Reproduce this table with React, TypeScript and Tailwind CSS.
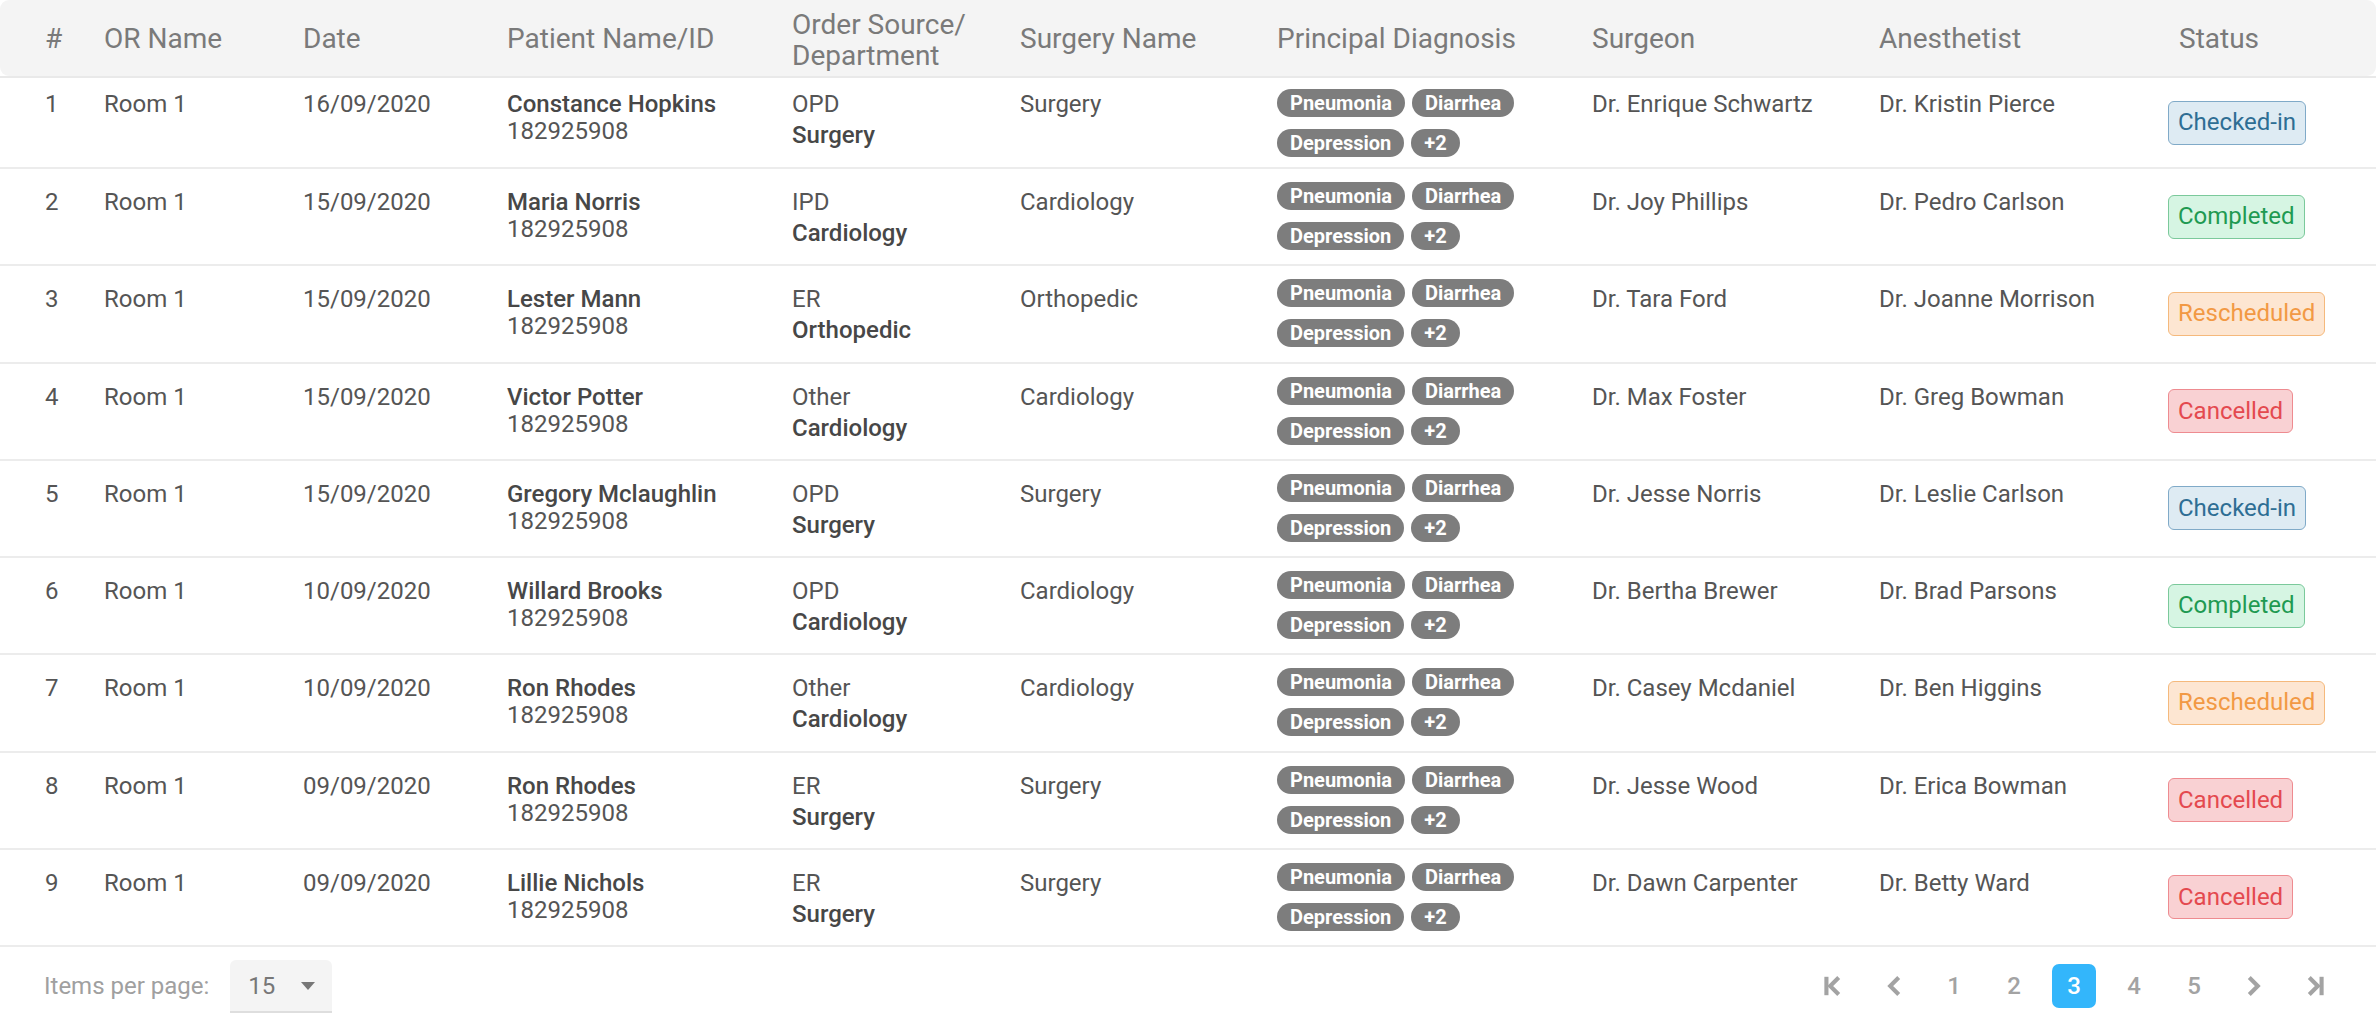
import { ReactNode } from 'react';

type Status = 'Checked-in' | 'Completed' | 'Rescheduled' | 'Cancelled';

type Row = {
  id: number;
  room: string;
  date: string;
  patient: string;
  patientId: string;
  source: string;
  department: string;
  surgery: string;
  surgeon: string;
  anesthetist: string;
  status: Status;
};

const rows: Row[] = [
  { id: 1, room: 'Room 1', date: '16/09/2020', patient: 'Constance Hopkins', patientId: '182925908', source: 'OPD', department: 'Surgery', surgery: 'Surgery', surgeon: 'Dr. Enrique Schwartz', anesthetist: 'Dr. Kristin Pierce', status: 'Checked-in' },
  { id: 2, room: 'Room 1', date: '15/09/2020', patient: 'Maria Norris', patientId: '182925908', source: 'IPD', department: 'Cardiology', surgery: 'Cardiology', surgeon: 'Dr. Joy Phillips', anesthetist: 'Dr. Pedro Carlson', status: 'Completed' },
  { id: 3, room: 'Room 1', date: '15/09/2020', patient: 'Lester Mann', patientId: '182925908', source: 'ER', department: 'Orthopedic', surgery: 'Orthopedic', surgeon: 'Dr. Tara Ford', anesthetist: 'Dr. Joanne Morrison', status: 'Rescheduled' },
  { id: 4, room: 'Room 1', date: '15/09/2020', patient: 'Victor Potter', patientId: '182925908', source: 'Other', department: 'Cardiology', surgery: 'Cardiology', surgeon: 'Dr. Max Foster', anesthetist: 'Dr. Greg Bowman', status: 'Cancelled' },
  { id: 5, room: 'Room 1', date: '15/09/2020', patient: 'Gregory Mclaughlin', patientId: '182925908', source: 'OPD', department: 'Surgery', surgery: 'Surgery', surgeon: 'Dr. Jesse Norris', anesthetist: 'Dr. Leslie Carlson', status: 'Checked-in' },
  { id: 6, room: 'Room 1', date: '10/09/2020', patient: 'Willard Brooks', patientId: '182925908', source: 'OPD', department: 'Cardiology', surgery: 'Cardiology', surgeon: 'Dr. Bertha Brewer', anesthetist: 'Dr. Brad Parsons', status: 'Completed' },
  { id: 7, room: 'Room 1', date: '10/09/2020', patient: 'Ron Rhodes', patientId: '182925908', source: 'Other', department: 'Cardiology', surgery: 'Cardiology', surgeon: 'Dr. Casey Mcdaniel', anesthetist: 'Dr. Ben Higgins', status: 'Rescheduled' },
  { id: 8, room: 'Room 1', date: '09/09/2020', patient: 'Ron Rhodes', patientId: '182925908', source: 'ER', department: 'Surgery', surgery: 'Surgery', surgeon: 'Dr. Jesse Wood', anesthetist: 'Dr. Erica Bowman', status: 'Cancelled' },
  { id: 9, room: 'Room 1', date: '09/09/2020', patient: 'Lillie Nichols', patientId: '182925908', source: 'ER', department: 'Surgery', surgery: 'Surgery', surgeon: 'Dr. Dawn Carpenter', anesthetist: 'Dr. Betty Ward', status: 'Cancelled' },
];

const statusStyles: Record<Status, string> = {
  'Checked-in': 'bg-[#deebf3] border-[#80aac8] text-[#2e6e94]',
  Completed: 'bg-[#d6f5e3] border-[#7bc99b] text-[#1f9a52]',
  Rescheduled: 'bg-[#fde6d2] border-[#f5b97c] text-[#f29944]',
  Cancelled: 'bg-[#f9d1d3] border-[#ee8b90] text-[#e4494f]',
};

const cols = 'grid grid-cols-[59px_199px_204px_285px_228px_257px_315px_287px_289px_1fr] pl-[45px]';

const Chip = ({ children }: { children: ReactNode }) => (
  <span className="h-[28px] px-[13px] rounded-full bg-[#7d7d7d] text-white text-[20px] font-bold leading-[28px]">
    {children}
  </span>
);

const ChevronIcon = ({ dir, bar }: { dir: 'left' | 'right'; bar?: boolean }) => (
  <svg width="26" height="26" viewBox="0 0 24 24" fill="none" stroke="#a3a3a3" strokeWidth="3.8">
    {dir === 'left' ? (
      <>
        <path d="M15 5.5 L8.5 12 L15 18.5" strokeLinecap="square" />
        {bar && <path d="M5 3.5 V20.5" />}
      </>
    ) : (
      <>
        <path d="M9 5.5 L15.5 12 L9 18.5" strokeLinecap="square" />
        {bar && <path d="M19 3.5 V20.5" />}
      </>
    )}
  </svg>
);

export default function App() {
  return (
    <div className="w-[2376px] h-[1024px] bg-white font-[Roboto,sans-serif] text-[24px] text-[#555] overflow-hidden">
      {/* header */}
      <div className={`${cols} h-[76px] items-center rounded-[9px] bg-[#f4f4f4] text-[28px] leading-[31px] text-[#7a7a7a]`}>
        <div>#</div>
        <div>OR Name</div>
        <div>Date</div>
        <div>Patient Name/ID</div>
        <div className="pt-[3px]">
          Order Source/
          <br />
          Department
        </div>
        <div>Surgery Name</div>
        <div>Principal Diagnosis</div>
        <div>Surgeon</div>
        <div>Anesthetist</div>
        <div className="pl-[11px]">Status</div>
      </div>
      <div className="h-[2px] bg-[#e9e9e9]" />

      {rows.map((r, i) => {
        const first = i === 0;
        const textPad = first ? 'pt-[13px]' : 'pt-[20px]';
        return (
          <div
            key={r.id}
            className={`${cols} border-b-2 border-[#ececec] leading-[27px] ${first ? 'h-[91px]' : 'h-[97.25px]'}`}
          >
            <div className={textPad}>{r.id}</div>
            <div className={textPad}>{r.room}</div>
            <div className={textPad}>{r.date}</div>
            <div className={textPad}>
              <div className="font-medium text-[#474747]">{r.patient}</div>
              <div>{r.patientId}</div>
            </div>
            <div className={textPad}>
              <div>{r.source}</div>
              <div className="mt-[4px] font-medium text-[#474747]">{r.department}</div>
            </div>
            <div className={textPad}>{r.surgery}</div>
            <div className={`${first ? 'pt-[11px]' : 'pt-[13px]'} pr-[40px] flex flex-wrap content-start gap-x-[7px] gap-y-[12px]`}>
              <Chip>Pneumonia</Chip>
              <Chip>Diarrhea</Chip>
              <Chip>Depression</Chip>
              <Chip>+2</Chip>
            </div>
            <div className={textPad}>{r.surgeon}</div>
            <div className={textPad}>{r.anesthetist}</div>
            <div className="flex items-center">
              <span
                className={`h-[44px] px-[9px] flex items-center rounded-[6px] border-[1.5px] ${statusStyles[r.status]}`}
              >
                {r.status}
              </span>
            </div>
          </div>
        );
      })}

      {/* footer */}
      <div className="h-[77px] flex items-center justify-between pl-[44px] pr-[40px]">
        <div className="flex items-center gap-[21px]">
          <span className="text-[24px] text-[#a0a0a0]">Items per page:</span>
          <div className="w-[102px] h-[53px] mt-[2px] flex items-center justify-between pl-[18px] pr-[17px] rounded-t-[6px] bg-[#f4f4f4] border-b-2 border-[#dedede] text-[#777]">
            <span>15</span>
            <svg width="14" height="8" viewBox="0 0 14 8">
              <path d="M0 0 H14 L7 8 Z" fill="#777" />
            </svg>
          </div>
        </div>
        <div className="flex items-center gap-[16px] font-medium text-[#a3a3a3]">
          <button className="w-[44px] h-[44px] flex items-center justify-center">
            <ChevronIcon dir="left" bar />
          </button>
          <button className="w-[44px] h-[44px] flex items-center justify-center">
            <ChevronIcon dir="left" />
          </button>
          {[1, 2, 3, 4, 5].map((n) => (
            <button
              key={n}
              className={`w-[44px] h-[44px] flex items-center justify-center rounded-[7px] ${n === 3 ? 'bg-[#33b6fb] text-white' : ''}`}
            >
              {n}
            </button>
          ))}
          <button className="w-[44px] h-[44px] flex items-center justify-center">
            <ChevronIcon dir="right" />
          </button>
          <button className="w-[44px] h-[44px] flex items-center justify-center">
            <ChevronIcon dir="right" bar />
          </button>
        </div>
      </div>
    </div>
  );
}
